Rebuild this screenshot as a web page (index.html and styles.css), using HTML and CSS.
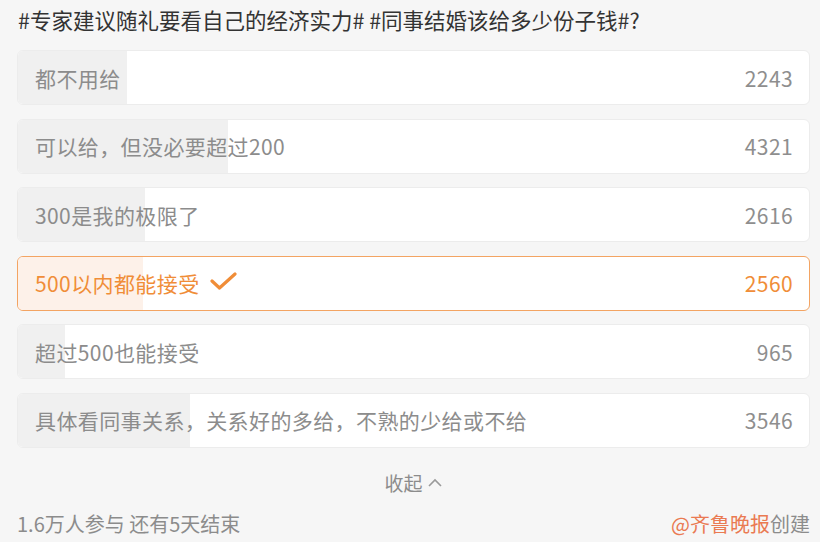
FILE: index.html
```html
<!DOCTYPE html>
<html lang="zh-CN">
<head>
  <meta charset="UTF-8" />
  <meta name="viewport" content="width=device-width, initial-scale=1" />
  <title>投票</title>
  <link rel="stylesheet" href="styles.css">
</head>
<body>
  <main class="poll">
    <h1 class="poll-title">#专家建议随礼要看自己的经济实力# #同事结婚该给多少份子钱#?</h1>

    <ul class="options">
      <li class="option">
        <div class="fill" style="width: 13.8%"></div>
        <span class="label">都不用给</span>
        <span class="count">2243</span>
      </li>
      <li class="option">
        <div class="fill" style="width: 26.6%"></div>
        <span class="label">可以给，但没必要超过200</span>
        <span class="count">4321</span>
      </li>
      <li class="option">
        <div class="fill" style="width: 16.1%"></div>
        <span class="label">300是我的极限了</span>
        <span class="count">2616</span>
      </li>
      <li class="option selected">
        <div class="fill" style="width: 15.8%"></div>
        <span class="label">500以内都能接受
          <svg class="check" width="27" height="18" viewBox="0 0 27 18">
            <path d="M2 9 L9.5 16 L25 2" fill="none" stroke="#f08d38" stroke-width="3.2" stroke-linecap="round" stroke-linejoin="round"/>
          </svg>
        </span>
        <span class="count">2560</span>
      </li>
      <li class="option">
        <div class="fill" style="width: 5.9%"></div>
        <span class="label">超过500也能接受</span>
        <span class="count">965</span>
      </li>
      <li class="option">
        <div class="fill" style="width: 21.8%"></div>
        <span class="label">具体看同事关系，关系好的多给，不熟的少给或不给</span>
        <span class="count">3546</span>
      </li>
    </ul>

    <div class="collapse">收起
      <svg width="16" height="10" viewBox="0 0 16 10">
        <path d="M2 8 L8 2 L14 8" fill="none" stroke="#9a9a9a" stroke-width="1.6"/>
      </svg>
    </div>

    <footer class="poll-footer">
      <span>1.6万人参与 还有5天结束</span>
      <span><span class="author">@齐鲁晚报</span>创建</span>
    </footer>
  </main>
</body>
</html>
```

FILE: styles.css
```css
body {
  background-color: #f6f6f6;
  margin: 0;
  padding: 0;
  font-family: "Noto Sans CJK SC", "Noto Sans", sans-serif;
  color: #8c8c8c;
}

.poll {
  padding: 6px 10px 0 17px;
}

.poll-title {
  margin: 0 0 16px 1px;
  font-size: 21.5px;
  font-weight: 400;
  line-height: 28px;
  color: #333;
}

.options {
  list-style: none;
  margin: 0;
  padding: 0;
  display: flex;
  flex-direction: column;
  gap: 13.6px;
}

.option {
  position: relative;
  height: 55px;
  box-sizing: border-box;
  display: flex;
  align-items: center;
  justify-content: space-between;
  padding: 0 16px 0 17px;
  background-color: #fff;
  border: 1px solid #ececec;
  border-radius: 6px;
  overflow: hidden;
  font-size: 21px;
  letter-spacing: 0.4px;
}

.option .fill {
  position: absolute;
  top: 0;
  left: 0;
  bottom: 0;
  background-color: #f0f0f0;
}

.label, .count {
  position: relative;
}

.label {
  display: flex;
  align-items: center;
  gap: 10px;
}

.count {
  color: #8e8e8e;
}

.option.selected {
  border-color: #f3a463;
}

.option.selected .fill {
  background-color: #fdf1e9;
}

.option.selected .label,
.option.selected .count {
  color: #f08d38;
}

.check {
  margin-top: -4px;
}

.collapse {
  display: flex;
  align-items: center;
  justify-content: center;
  gap: 4px;
  margin-top: 21px;
  font-size: 19px;
  line-height: 28px;
  color: #8c8c8c;
}

.poll-footer {
  display: flex;
  justify-content: space-between;
  margin-top: 14px;
  font-size: 20px;
  line-height: 26px;
  color: #8c8c8c;
}

.author {
  color: #ea7a52;
}
```
